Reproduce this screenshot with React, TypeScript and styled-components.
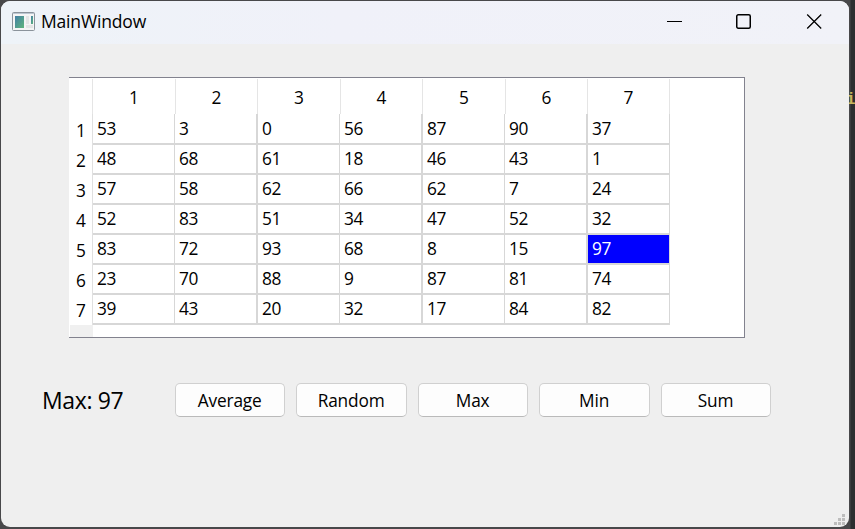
import React from "react";
import styled, { createGlobalStyle } from "styled-components";

const GlobalStyle = createGlobalStyle`
  * { box-sizing: border-box; }
  body { margin: 0; overflow: hidden; background: #2d2d2e; }
`;

const Desktop = styled.div`
  position: relative;
  width: 855px;
  height: 529px;
  padding: 1px 0 0 1px;
  overflow: hidden;
  background: linear-gradient(90deg, #48484a 0 850px, #2c2e2f 851px);
  font-family: "Open Sans", "Noto Sans", sans-serif;
  color: #000;
`;

const EditorText = styled.span`
  position: absolute;
  left: 846px;
  top: 89px;
  font: bold 16px/22px "Liberation Mono", monospace;
  letter-spacing: -1px;
  color: #c8b65e;
`;

const Window = styled.main`
  position: relative;
  width: 848px;
  height: 526px;
  border-radius: 9px;
  overflow: hidden;
  background: #efefef;
`;

const TitleBar = styled.header`
  display: flex;
  align-items: center;
  height: 43px;
  padding: 0 27px 0 11px;
  background: linear-gradient(90deg, #eef3f8, #f0f1f9 40%, #f1f2f8);
`;

const AppIcon = styled.svg`
  width: 23px;
  height: 19px;
  margin-top: -3px;
`;

const Title = styled.h1`
  margin: -4px auto 0 6px;
  font-size: 17.5px;
  line-height: 24px;
  font-weight: 400;
  letter-spacing: -0.17px;
`;

const Controls = styled.div`
  display: flex;
  align-items: center;
  margin-top: -3px;
`;

const ControlIcon = styled.svg<{ $gap: number }>`
  width: 16px;
  height: 16px;
  margin-left: ${(p) => p.$gap}px;
  fill: none;
  stroke: #000;
`;

const Table = styled.section`
  width: 676px;
  height: 261px;
  margin: 33px 0 0 68px;
  border: solid #82828e;
  border-width: 1px 1px 1px 0;
  background: #fff;
`;

const HeaderRow = styled.div`
  display: grid;
  grid-template-columns: 24px 83px 82px 83px 82px 83px 82px 82px;
  height: 36px;
`;

const Row = styled.div<{ $height: number }>`
  display: grid;
  grid-template-columns: 24px 82px 82px 83px 82px 83px 82px 83px;
  height: ${(p) => p.$height}px;
`;

const ColumnHead = styled.div`
  margin-top: 1px;
  border-right: 1px solid #e5e5e5;
  padding-top: 6px;
  text-align: center;
  font-size: 17.3px;
  line-height: 26px;
`;

const RowHead = styled.div<{ $first: boolean }>`
  border-right: 1px solid #e0e0e0;
  padding: ${(p) => (p.$first ? 5 : 4)}px 6px 0 0;
  text-align: right;
  font-size: 17.3px;
  line-height: 24px;
`;

const Cell = styled.div<{ $wide: boolean; $selected: boolean; $first: boolean }>`
  border: solid #d7d7d7;
  border-width: 0 1px 2px ${(p) => (p.$wide ? 1 : 0)}px;
  padding: ${(p) => (p.$first ? 3 : 2)}px 0 0 4px;
  font-size: 17.3px;
  line-height: 24px;
  letter-spacing: -0.45px;
  background: ${(p) => (p.$selected ? "#0000ff" : "#fff")};
  color: ${(p) => (p.$selected ? "#fff" : "#000")};
`;

const HeaderFill = styled.div`
  width: 23px;
  height: 12px;
  margin-left: 1px;
  background: #f0f0f0;
`;

const ActionBar = styled.div`
  display: flex;
  align-items: center;
  height: 34px;
  margin: 45px 0 0 41px;
`;

const Result = styled.output`
  width: 133px;
  font-size: 23px;
  line-height: 30px;
  letter-spacing: -0.35px;
  white-space: nowrap;
`;

const Buttons = styled.div`
  display: grid;
  grid-template-columns: repeat(5, 110.3px);
  column-gap: 11.2px;
`;

const Button = styled.button`
  height: 34px;
  padding: 1px 1px 0 0;
  border: 1px solid #d0d0d0;
  border-bottom-color: #bababa;
  border-radius: 5px;
  background: #fdfdfd;
  color: #000;
  font-family: inherit;
  font-size: 17.3px;
  letter-spacing: -0.15px;
`;

const Grip = styled.svg`
  position: absolute;
  right: 3px;
  bottom: 1px;
  width: 12px;
  height: 12px;
  fill: #bdbdbd;
`;

const data = [
  [53, 3, 0, 56, 87, 90, 37],
  [48, 68, 61, 18, 46, 43, 1],
  [57, 58, 62, 66, 62, 7, 24],
  [52, 83, 51, 34, 47, 52, 32],
  [83, 72, 93, 68, 8, 15, 97],
  [23, 70, 88, 9, 87, 81, 74],
  [39, 43, 20, 32, 17, 84, 82],
];

const actions = ["Average", "Random", "Max", "Min", "Sum"];

export default function App() {
  return (
    <Desktop>
      <GlobalStyle />
      <EditorText>i</EditorText>
      <Window>
        <TitleBar>
          <AppIcon viewBox="0 0 23 19">
            <defs>
              <linearGradient id="pane" x1="0" y1="0" x2="1" y2="1">
                <stop offset="0" stopColor="#437fa6" />
                <stop offset="1" stopColor="#60b67b" />
              </linearGradient>
            </defs>
            <rect x=".5" y=".5" width="22" height="18" rx="1" fill="#f5f5f5" stroke="#8b939b" />
            <path d="M1 1.5h21" stroke="#bcc6d1" />
            <rect x="3" y="4" width="9" height="12" fill="url(#pane)" />
            <path d="M14 4h3v8h-3zM14 13h7v3h-7z" fill="#e4e5e5" />
            <rect x="19" y="4" width="2" height="8" fill="url(#pane)" />
          </AppIcon>
          <Title>MainWindow</Title>
          <Controls>
            <ControlIcon $gap={0} viewBox="0 0 16 16"><path d="M1 8.5h15" /></ControlIcon>
            <ControlIcon $gap={53} viewBox="0 0 16 16"><rect x="1.75" y="1.75" width="13.5" height="13.5" rx="1.5" strokeWidth="1.5" /></ControlIcon>
            <ControlIcon $gap={55} viewBox="0 0 16 16"><path d="m1.2 1.5 14 14M15.2 1.5l-14 14" strokeWidth="1.3" /></ControlIcon>
          </Controls>
        </TitleBar>
        <Table>
          <HeaderRow>
            <ColumnHead />
            {data[0].map((_, i) => <ColumnHead key={i}>{i + 1}</ColumnHead>)}
          </HeaderRow>
          {data.map((row, r) => (
            <Row key={r} $height={r === 0 ? 31 : 30}>
              <RowHead $first={r === 0}>{r + 1}</RowHead>
              {row.map((value, c) => (
                <Cell key={c} $wide={c > 0 && c % 2 === 0} $selected={value === 97} $first={r === 0}>{value}</Cell>
              ))}
            </Row>
          ))}
          <HeaderFill />
        </Table>
        <ActionBar>
          <Result>Max: 97</Result>
          <Buttons>{actions.map((name) => <Button key={name}>{name}</Button>)}</Buttons>
        </ActionBar>
        <Grip viewBox="0 0 12 12">
          <path d="M8 0h3v3H8zM4 4h3v3H4zM8 4h3v3H8zM0 8h3v3H0zM4 8h3v3H4zM8 8h3v3H8z" />
        </Grip>
      </Window>
    </Desktop>
  );
}
